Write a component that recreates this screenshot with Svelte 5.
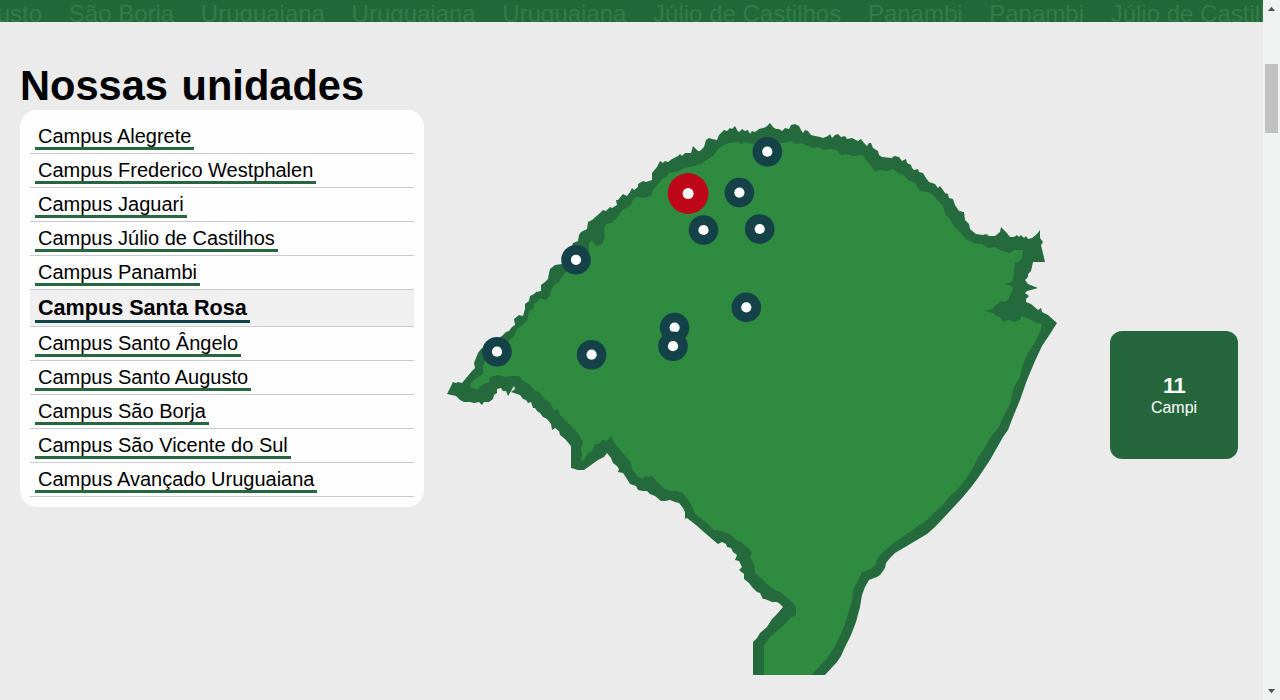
<script>
  const ticker = ['Santo Augusto', 'São Borja', 'Uruguaiana', 'Uruguaiana', 'Uruguaiana', 'Júlio de Castilhos', 'Panambi', 'Panambi', 'Júlio de Castilhos'];
  const campi = [
    'Campus Alegrete', 'Campus Frederico Westphalen', 'Campus Jaguari', 'Campus Júlio de Castilhos',
    'Campus Panambi', 'Campus Santa Rosa', 'Campus Santo Ângelo', 'Campus Santo Augusto',
    'Campus São Borja', 'Campus São Vicente do Sul', 'Campus Avançado Uruguaiana'
  ];
  let active = $state('Campus Santa Rosa');

  const pins = [
    ['Campus Frederico Westphalen', 767.3, 151.7],
    ['Campus Santo Augusto', 739.4, 192.6],
    ['Campus Panambi', 759.7, 229],
    ['Campus Santo Ângelo', 703.5, 230],
    ['Campus São Borja', 576, 259.8],
    ['Campus Júlio de Castilhos', 746.3, 307.4],
    ['Campus Jaguari', 674.6, 327.6],
    ['Campus São Vicente do Sul', 673, 346.2],
    ['Campus Alegrete', 591.6, 354.7],
    ['Campus Avançado Uruguaiana', 497, 351.7],
    ['Campus Santa Rosa', 688.1, 193.5]
  ];

  const border = `447,394 453,382 456,383 458,382 462,383 467,377 472,371 475,368 474,363 476,358 478,353 481,349 502,336 506,332 509,331 512,327 515,325 514,319 519,315 523,316 525,309 525,304 529,301 530,296 534,294 536,292 541,291 541,285 545,282 548,279 549,273 550,269 555,265 562,264 565,253 572,246 573,243 578,241 579,235 581,232 587,229 588,222 592,220 600,213 603,210 606,211 610,207 612,208 617,205 616,200 618,200 623,194 627,196 630,192 632,188 634,190 638,187 638,184 643,181 646,182 652,180 652,173 657,167 660,161 663,163 665,161 668,162 672,159 678,156 680,154 682,156 685,153 691,153 693,146 698,151 700,151 704,147 706,140 709,138 712,139 717,140 719,135 724,130 727,131 730,128 732,129 735,126 737,130 739,132 742,129 745,131 748,130 750,134 752,131 755,132 759,129 763,128 766,127 770,123 773,127 776,129 779,129 782,131 785,128 789,129 791,125 795,124 799,126 801,130 803,133 805,130 808,131 811,135 815,136 820,137 823,138 828,136 830,134 832,138 835,135 838,134 841,137 845,136 847,139 852,138 858,141 861,139 864,143 867,146 869,143 871,143 873,148 878,151 879,155 882,157 892,158 894,156 899,157 902,161 906,159 907,163 911,165 912,168 914,170 918,169 919,172 923,173 926,178 929,182 935,184 938,188 940,186 943,190 945,193 948,194 949,198 953,199 955,205 959,211 964,212 965,220 969,224 970,229 976,234 983,235 986,234 989,236 995,236 1000,232 1001,227 1006,232 1010,237 1014,237 1017,235 1019,237 1021,235 1024,238 1026,236 1028,239 1032,238 1037,234 1040,230 1040,238 1043,242 1041,245 1045,262 1033,262 1031,271 1028,274 1028,277 1025,280 1028,284 1038,288 1027,291 1025,293 1029,296 1026,299 1026,302 1031,304 1038,310 1041,308 1042,312 1048,315 1057,323 1050,334 1042,346 1035,361 1027,380 1020,400 1013,417 1008,430 1003,437 990,460 978,478 972,486 963,497 950,511 935,527 927,534 917,540 895,553 890,558 886,563 885,568 883,571 880,575 877,577 869,580 865,587 862,595 860,607 856,622 851,635 845,647 841,656 837,662 825,675 753,675 753,642 757,638 760,633 767,627 772,619 777,614 783,607 780,604 777,602 772,602 765,599 763,599 760,593 757,592 752,587 749,583 744,579 744,574 739,570 742,567 739,561 735,560 737,555 733,552 731,548 727,547 726,544 722,542 718,544 712,539 705,533 696,525 687,518 685,519 685,512 683,508 679,503 675,502 670,500 665,501 661,501 655,496 650,494 647,491 643,491 638,490 636,486 630,484 627,479 623,473 618,472 619,469 617,466 613,463 611,458 607,453 604,457 598,460 584,470 578,470 571,468 571,446 565,439 560,435 559,431 555,428 552,430 551,424 547,419 543,417 540,413 537,411 535,408 533,408 531,402 528,403 526,400 523,399 520,395 517,394 511,392 515,389 514,386 508,396 506,391 503,391 501,388 497,389 497,393 494,395 493,399 489,402 484,402 482,405 479,402 474,403 470,402 464,402 460,400 456,396`;

  const interior = `470,387 471,383 475,379 483,374 483,367 485,361 494,352 512,338 515,334 517,329 522,325 527,321 529,311 533,309 534,304 538,301 540,298 546,300 550,296 551,290 554,285 559,282 561,278 565,273 571,267 585,256 589,251 589,243 592,240 594,244 597,246 602,244 605,237 604,229 606,224 611,223 616,219 619,215 621,211 626,208 631,205 633,199 637,197 644,198 651,196 653,190 658,184 662,179 666,177 669,173 679,171 684,168 695,166 701,164 705,161 713,156 718,149 724,145 729,143 737,142 741,144 745,142 753,144 767,141 783,143 791,141 796,144 801,143 808,146 813,148 819,147 824,150 830,149 837,150 841,155 846,154 853,156 863,155 866,160 871,166 875,172 880,170 888,171 893,169 898,173 904,175 908,180 915,183 920,191 928,192 933,195 939,202 943,206 945,214 950,219 954,226 961,233 966,239 974,243 982,244 988,248 995,247 1002,251 1010,253 1014,250 1023,250 1022,258 1018,262 1015,263 1014,269 1013,281 1009,283 1004,284 1012,286 1013,291 1010,294 1009,299 1005,302 1000,301 998,304 994,306 993,309 985,311 993,313 997,316 1000,317 1003,322 1008,320 1015,322 1021,319 1021,316 1027,318 1035,322 1042,324 1040,332 1034,344 1028,353 1023,364 1020,377 1014,387 1010,404 1003,417 999,427 992,435 984,449 978,457 973,468 966,479 958,489 949,497 943,505 934,513 927,520 911,531 901,538 890,546 880,555 877,559 876,564 871,569 862,572 858,581 853,590 852,601 849,611 845,624 841,634 835,646 828,657 819,667 811,675 764,675 764,645 771,636 778,630 784,625 790,618 796,615 796,607 792,602 786,597 780,592 775,590 768,585 762,579 755,573 754,564 750,557 752,553 748,548 741,542 736,540 730,534 722,531 714,530 707,523 695,514 691,504 688,500 683,493 677,491 671,491 665,489 658,483 652,476 648,477 645,476 643,479 638,477 632,469 631,462 626,457 621,451 615,444 613,440 611,436 607,441 603,440 598,444 595,444 592,451 588,453 584,460 581,461 582,454 581,448 583,443 581,438 578,433 572,427 567,422 560,415 558,409 554,411 550,402 545,400 540,393 534,390 529,384 523,381 519,376 512,376 505,377 499,375 490,377 489,382 484,384 479,387 477,390`;
</script>

<div class="page">
  <div class="content">
    <div class="ticker">
      {#each ticker as name}<span>{name}</span>{/each}
    </div>
    <main>
      <section class="units">
        <h1>Nossas unidades</h1>
        <ul>
          {#each campi as name}
            <li class:active={name === active}>
              <button onclick={() => (active = name)}>{name}</button>
            </li>
          {/each}
        </ul>
      </section>
      <svg class="map" width="612" height="552" viewBox="446 123 612 552">
        <polygon points={border} fill="#246a3c" />
        <polygon points={interior} fill="#2f8b40" />
        {#each pins as [name, x, y]}
          <circle cx={x} cy={y} r={name === active ? 20.4 : 14.8} fill={name === active ? '#be0719' : '#154248'} />
          <circle cx={x} cy={y} r={name === active ? 5.5 : 5.1} fill={name === active ? '#fbf6f2' : '#fff'} />
        {/each}
      </svg>
      <div class="stat">
        <strong>11</strong>
        <span>Campi</span>
      </div>
    </main>
  </div>
  <div class="scrollbar">
    <svg width="17" height="17" viewBox="0 0 17 17"><path d="M5 11L8.5 6.7L12 11Z" fill="#505050" /></svg>
    <div class="track"><div class="thumb"></div></div>
    <svg width="17" height="17" viewBox="0 0 17 17"><path d="M5 6L8.5 10.3L12 6Z" fill="#505050" /></svg>
  </div>
</div>

<style>
  :global(body) {
    overflow: hidden;
  }
  .page {
    display: flex;
    width: 1280px;
    height: 700px;
    overflow: hidden;
    background: #ebebeb;
    font-family: 'Liberation Sans', Arial, sans-serif;
    color: #000;
  }
  .content {
    width: 1263px;
    flex: none;
  }
  .ticker {
    display: flex;
    gap: 26.67px;
    height: 22px;
    box-sizing: border-box;
    overflow: hidden;
    background: #22693a;
    color: #337c46;
    font-size: 24px;
    line-height: 28px;
    white-space: nowrap;
  }
  .ticker span:first-child {
    margin-left: -114px;
  }
  .ticker span {
    flex: none;
  }
  main {
    display: flex;
    height: 678px;
  }
  .units {
    width: 404px;
    margin-left: 20px;
    padding-top: 39px;
    flex: none;
  }
  h1 {
    margin: 0;
    height: 49px;
    font-size: 41.6px;
    line-height: 49px;
    word-spacing: 2px;
    white-space: nowrap;
  }
  ul {
    margin: 0;
    padding: 10px;
    list-style: none;
    background: #fefefe;
    border-radius: 17px;
  }
  li {
    display: flex;
    align-items: flex-start;
    height: 34px;
    box-sizing: border-box;
    padding: 4px 5px 0;
    border-bottom: 1px solid #c8cbca;
  }
  li button {
    height: 26px;
    padding: 1px 3px 0;
    box-sizing: border-box;
    border: 0;
    border-bottom: 3px solid #28663f;
    background: none;
    color: #000;
    font: 20px/23px 'Liberation Sans', Arial, sans-serif;
    white-space: nowrap;
  }
  li.active {
    height: 37px;
    background: #f0f0f1;
  }
  li.active button {
    height: 29px;
    border-color: #154248;
    font-size: 21.6px;
    line-height: 26px;
    font-weight: 700;
  }
  .map {
    display: block;
    flex: none;
    margin: 101px 0 0 22px;
  }
  .stat {
    display: flex;
    flex-direction: column;
    align-items: center;
    justify-content: center;
    flex: none;
    width: 128px;
    height: 128px;
    margin: 309px 0 0 52px;
    border-radius: 12px;
    background: #26663c;
    color: #fff;
    font-size: 16px;
    line-height: 18px;
  }
  .stat strong {
    font-size: 22px;
    line-height: 26px;
    letter-spacing: -0.6px;
  }
  .scrollbar {
    display: flex;
    flex-direction: column;
    width: 17px;
    background: #f0f1f1;
  }
  .scrollbar svg {
    display: block;
  }
  .track {
    flex: 1;
    padding: 47px 2px 0;
  }
  .thumb {
    height: 69px;
    background: #c1c1c1;
  }
</style>
